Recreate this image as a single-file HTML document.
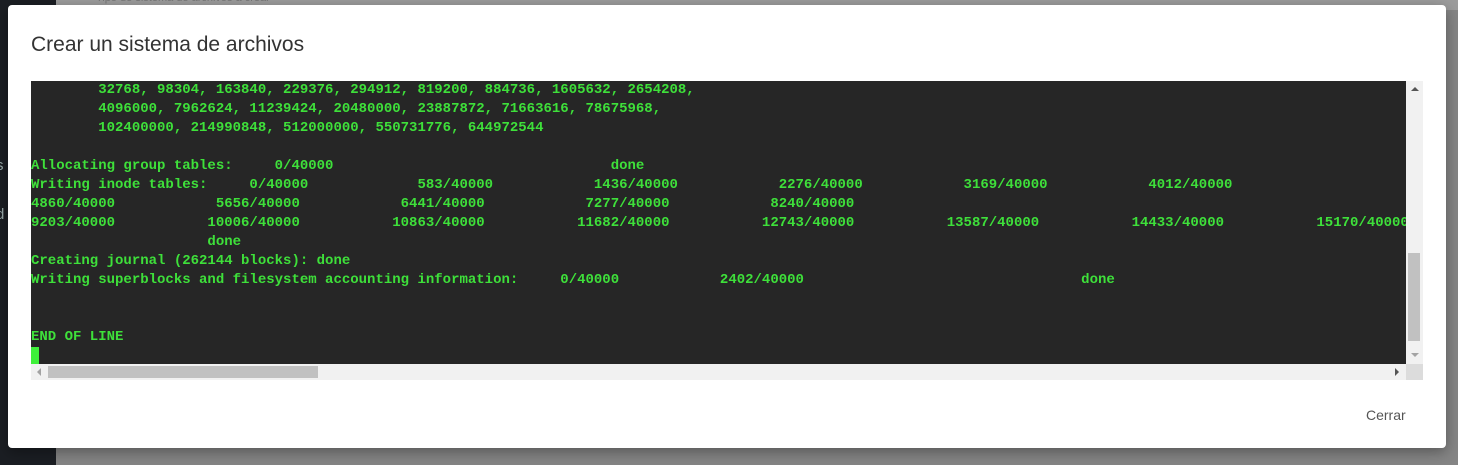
<!DOCTYPE html>
<html><head><meta charset="utf-8"><style>
html,body{margin:0;padding:0;width:1458px;height:465px;overflow:hidden;background:#858585;font-family:"Liberation Sans",sans-serif;position:relative}
.side{position:absolute;left:0;top:0;width:56px;height:465px;background:#1b1e23}
.side span{position:absolute;left:-4px;color:#9aa;font-size:15px}
.topbar{position:absolute;left:56px;top:0;right:0;height:10px;background:#9c9c9c}
.topbar span{position:absolute;left:40px;top:-8px;font-size:11px;color:#777}
.modal{position:absolute;left:8px;top:5px;width:1438px;height:443px;background:#fff;border-radius:4px;box-shadow:0 4px 14px rgba(0,0,0,.35)}
.title{position:absolute;left:23px;top:28px;font-size:21px;color:#333}
.term{position:absolute;left:23px;top:76px;width:1375px;height:283px;background:#262626;overflow:hidden}
pre{margin:0;position:absolute;left:0;top:0px;font-family:"Liberation Mono",monospace;font-weight:bold;font-size:14px;line-height:19px;color:#3ee03a;white-space:pre}
.cur{position:absolute;left:0;top:266px;width:8px;height:17px;background:#3ef03a}
.vs{position:absolute;left:1398px;top:76px;width:17px;height:283px;background:#f1f1f1}
.vs .th{position:absolute;left:2px;top:172px;width:12px;height:88px;background:#c1c1c1}
.hs{position:absolute;left:23px;top:359px;width:1375px;height:16px;background:#f1f1f1}
.hs .th{position:absolute;left:17px;top:2px;width:270px;height:12px;background:#c1c1c1}
.corner{position:absolute;left:1398px;top:359px;width:17px;height:16px;background:#dcdcdc}
.tri{position:absolute;width:0;height:0}
.btn{position:absolute;left:1358px;top:402px;font-size:14px;color:#555}
</style></head><body>
<div class="side"><span style="top:157px">s</span><span style="top:206px">d</span></div>
<div class="topbar"><span>Tipo de sistema de archivos a crear</span></div>
<div class="modal">
<div class="title">Crear un sistema de archivos</div>
<div class="term"><pre>        32768, 98304, 163840, 229376, 294912, 819200, 884736, 1605632, 2654208,
        4096000, 7962624, 11239424, 20480000, 23887872, 71663616, 78675968,
        102400000, 214990848, 512000000, 550731776, 644972544

Allocating group tables:     0/40000                                 done
Writing inode tables:     0/40000             583/40000            1436/40000            2276/40000            3169/40000            4012/40000
4860/40000            5656/40000            6441/40000            7277/40000            8240/40000
9203/40000           10006/40000           10863/40000           11682/40000           12743/40000           13587/40000           14433/40000           15170/40000
                     done
Creating journal (262144 blocks): done
Writing superblocks and filesystem accounting information:     0/40000            2402/40000                                 done


END OF LINE</pre><div class="cur"></div></div>
<div class="vs"><div class="th"></div>
<div class="tri" style="left:5px;top:6px;border-left:4px solid transparent;border-right:4px solid transparent;border-bottom:4px solid #555"></div>
<div class="tri" style="left:5px;top:272px;border-left:4px solid transparent;border-right:4px solid transparent;border-top:4px solid #a3a3a3"></div></div>
<div class="hs"><div class="th"></div>
<div class="tri" style="left:6px;top:4px;border-top:4px solid transparent;border-bottom:4px solid transparent;border-right:4px solid #a3a3a3"></div>
<div class="tri" style="left:1364px;top:4px;border-top:4px solid transparent;border-bottom:4px solid transparent;border-left:4px solid #555"></div></div>
<div class="corner"></div>
<div class="btn">Cerrar</div>
</div>
</body></html>
